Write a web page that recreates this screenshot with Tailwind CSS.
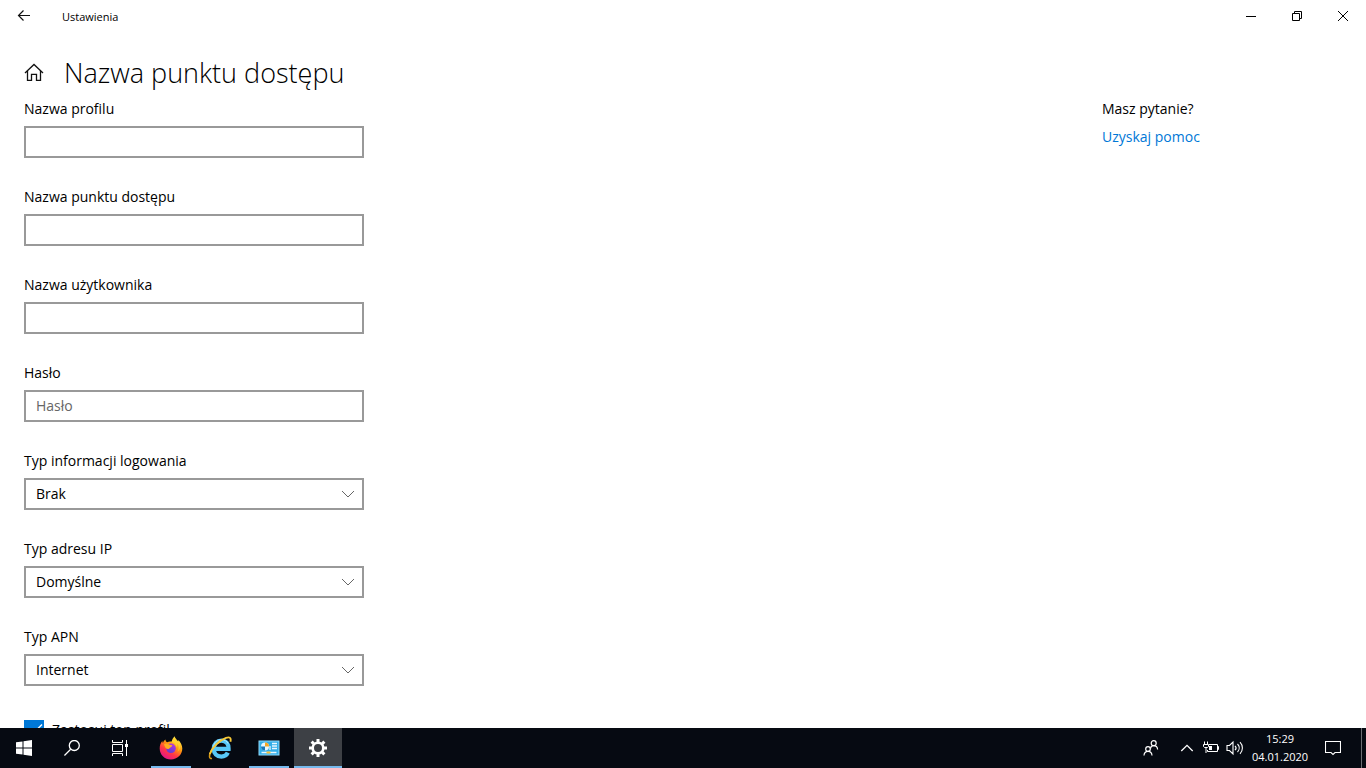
<!DOCTYPE html>
<html lang="pl">
<head>
<meta charset="utf-8">
<meta name="viewport" content="width=device-width, initial-scale=1">
<title>Ustawienia</title>
<script src="https://cdn.jsdelivr.net/npm/@tailwindcss/browser@4"></script>
</head>
<body class="flex h-screen flex-col overflow-hidden bg-white font-['Open_Sans','Noto_Sans',sans-serif] text-sm text-black">

<!-- Title bar -->
<header class="flex h-8 shrink-0 items-center">
  <button type="button" aria-label="Wstecz" class="grid h-8 w-12 place-items-center">
    <svg class="size-4" viewBox="0 0 16 16" fill="none" stroke="#111" stroke-width="1.2"><path d="M14 7.5H2.5M7.5 2.5l-5 5 5 5"/></svg>
  </button>
  <span class="ml-3.5 flex-1 pt-0.5 text-[11px]">Ustawienia</span>
  <button type="button" aria-label="Minimalizuj" class="grid h-8 w-[46px] place-items-center">
    <svg class="size-4" viewBox="0 0 16 16" fill="none" stroke="#000"><path d="M3 8.5h10"/></svg>
  </button>
  <button type="button" aria-label="Przywróć w dół" class="grid h-8 w-[46px] place-items-center">
    <svg class="size-4" viewBox="0 0 16 16" fill="none" stroke="#000"><path d="M3.500 5.500h7v7h-7zM5.500 5.500v-2h7v7h-2"/></svg>
  </button>
  <button type="button" aria-label="Zamknij" class="grid h-8 w-[46px] place-items-center">
    <svg class="size-4" viewBox="0 0 16 16" fill="none" stroke="#000"><path d="M3 3l10 10M13 3L3 13"/></svg>
  </button>
</header>

<div class="flex shrink-0 items-center gap-5 px-6 pt-[21px] pb-[3px]">
  <button type="button" aria-label="Strona główna" class="size-5">
    <svg class="size-5" viewBox="0 0 20 20" fill="none" stroke="#111" stroke-width="1.3"><path d="M1 10L10 1.500l9 8.500M3.500 8v9.400h4v-6h5v6h4V8"/></svg>
  </button>
  <h1 class="text-[27px] leading-10 font-light">Nazwa punktu dostępu</h1>
</div>

<!-- Page content -->
<main class="flex min-h-0 flex-1 justify-between overflow-hidden pt-[3px] pl-6">
  <form class="flex w-[340px] shrink-0 flex-col gap-[29px]">
    <div class="flex flex-col gap-[7px]">
      <label for="profile" class="leading-5">Nazwa profilu</label>
      <input id="profile" type="text" class="h-8 w-full border-2 border-[#999] px-2.5 pb-0.5 outline-none">
    </div>
    <div class="flex flex-col gap-[7px]">
      <label for="apn" class="leading-5">Nazwa punktu dostępu</label>
      <input id="apn" type="text" class="h-8 w-full border-2 border-[#999] px-2.5 pb-0.5 outline-none">
    </div>
    <div class="flex flex-col gap-[7px]">
      <label for="user" class="leading-5">Nazwa użytkownika</label>
      <input id="user" type="text" class="h-8 w-full border-2 border-[#999] px-2.5 pb-0.5 outline-none">
    </div>
    <div class="flex flex-col gap-[7px]">
      <label for="password" class="leading-5">Hasło</label>
      <input id="password" type="password" placeholder="Hasło" class="h-8 w-full border-2 border-[#999] px-2.5 pb-0.5 outline-none placeholder:text-[#666]">
    </div>
    <div class="flex flex-col gap-[7px]">
      <label for="auth" class="leading-5">Typ informacji logowania</label>
      <div class="grid items-center">
        <select id="auth" class="col-start-1 row-start-1 h-8 w-full appearance-none border-2 border-[#999] bg-white px-2.5"><option>Brak</option></select>
        <svg class="pointer-events-none col-start-1 row-start-1 mr-2 h-4 w-4 justify-self-end" viewBox="0 0 16 16" fill="none" stroke="#666"><path d="M2 5l6 6 6-6"/></svg>
      </div>
    </div>
    <div class="flex flex-col gap-[7px]">
      <label for="ip" class="leading-5">Typ adresu IP</label>
      <div class="grid items-center">
        <select id="ip" class="col-start-1 row-start-1 h-8 w-full appearance-none border-2 border-[#999] bg-white px-2.5"><option>Domyślne</option></select>
        <svg class="pointer-events-none col-start-1 row-start-1 mr-2 h-4 w-4 justify-self-end" viewBox="0 0 16 16" fill="none" stroke="#666"><path d="M2 5l6 6 6-6"/></svg>
      </div>
    </div>
    <div class="flex flex-col gap-[7px]">
      <label for="apntype" class="leading-5">Typ APN</label>
      <div class="grid items-center">
        <select id="apntype" class="col-start-1 row-start-1 h-8 w-full appearance-none border-2 border-[#999] bg-white px-2.5"><option>Internet</option></select>
        <svg class="pointer-events-none col-start-1 row-start-1 mr-2 h-4 w-4 justify-self-end" viewBox="0 0 16 16" fill="none" stroke="#666"><path d="M2 5l6 6 6-6"/></svg>
      </div>
    </div>
    <div class="flex items-center gap-2 pt-[5px]">
      <span class="grid size-5 shrink-0">
        <input id="apply" type="checkbox" checked class="col-start-1 row-start-1 size-5 appearance-none bg-[#0078d7]">
        <svg class="pointer-events-none col-start-1 row-start-1 size-5" viewBox="0 0 20 20" fill="none" stroke="#fff" stroke-width="1.4"><path d="M2.500 10l5 5L18 4.500"/></svg>
      </span>
      <label for="apply" class="leading-5">Zastosuj ten profil</label>
    </div>
  </form>
  <aside class="flex w-[264px] shrink-0 flex-col items-start gap-2">
    <p class="leading-5">Masz pytanie?</p>
    <a href="#" class="leading-5 text-[#0078d7]">Uzyskaj pomoc</a>
  </aside>
</main>

<!-- Taskbar -->
<footer class="flex h-10 shrink-0 bg-[#060a12] text-white">
  <button type="button" aria-label="Start" class="grid w-12 place-items-center">
    <svg class="size-4" viewBox="0 0 16 16" fill="#fff"><path d="M0 2.300L6.500 1.400v6.100H0zM7.500 1.200L16 0v7.500H7.500zM0 8.500h6.500v6.100L0 13.700zM7.500 8.500H16V16l-8.500-1.200z"/></svg>
  </button>
  <button type="button" aria-label="Wyszukaj" class="grid w-12 place-items-center">
    <svg class="size-4" viewBox="0 0 16 16" fill="none" stroke="#fff" stroke-width="1.300"><circle cx="10.300" cy="5.500" r="5"/><path d="M6.700 9.200L.4 15.500"/></svg>
  </button>
  <button type="button" aria-label="Widok zadań" class="grid w-12 place-items-center">
    <svg class="size-4" viewBox="0 0 16 16" fill="none" stroke="#fff"><path d="M.5 0v2.500h10V0M.5 4.500h10v7H.5zM.5 16v-2.500h10V16M14.500 0v16"/><path fill="#fff" stroke="none" d="M13 4h3v3h-3z"/></svg>
  </button>
  <div class="ml-[3px] flex gap-px">
    <button type="button" aria-label="Firefox" class="grid w-12 grid-rows-[1fr_2px] place-items-center">
      <svg class="mt-0.5 size-6" viewBox="0 0 24 24">
        <defs>
          <linearGradient id="fx" x1=".8" y1=".05" x2=".25" y2=".95"><stop offset="0" stop-color="#fff44f"/><stop offset=".4" stop-color="#ff980e"/><stop offset=".7" stop-color="#ff3647"/><stop offset="1" stop-color="#e31587"/></linearGradient>
          <linearGradient id="fg" x1=".8" y1="0" x2=".3" y2="1"><stop offset="0" stop-color="#b833e1"/><stop offset="1" stop-color="#5a3fd0"/></linearGradient>
        </defs>
        <path fill="url(#fx)" d="M12 23.500C5.500 23.500.7 18.700.7 12.500c0-3.300 1-5.600 2.600-7.500.1 1 .3 1.500.7 2C4.400 5.400 5.200 4.300 6.500 3.500c0 1.300.6 2.200 1.600 2.700 1.400-.7 3-.9 4.700-.6C13 3.600 14 1.800 15.700.3c.2 2.600 2 3.900 3.500 5.300.1-.6.1-1-.1-1.600 2.700 2.300 4.200 5.400 4.200 8.600 0 6.200-5 10.900-11.300 10.900z"/>
        <circle cx="12" cy="12.300" r="4.800" fill="url(#fg)"/>
        <path fill="#ffad1f" d="M5 8.300c1.600-1 3.500-.9 5.100.2 1 .6 2.100.4 3.200.8-.2 1.400-1.300 1.800-2.300 2.500-.6.500-.9 1.200-1.900 1.300C7.200 13.300 5.600 11 5 8.300z"/>
        <path fill="#ffd52e" d="M12.600 6c2.700.5 4.800 2.600 4.800 5.400 1-1.600.7-3.300 0-4.700 2.100 1.300 3.500 5.600 1 9.100 3.400-2.400 3.600-7.400.7-10.200L15.700 1z" opacity=".75"/>
      </svg>
      <span class="h-0.5 w-10 bg-[#76b9ed]"></span>
    </button>
    <button type="button" aria-label="Internet Explorer" class="grid w-12 grid-rows-[1fr_2px] place-items-center">
      <svg class="mt-0.5 size-6" viewBox="0 0 24 24" fill="none">
        <path stroke="#d99b18" stroke-width="1.500" d="M4 22.500C1 23 .5 19.500 3.500 14.500"/>
        <path stroke="#58c8f7" stroke-width="4.200" d="M6.300 12.900h14.300c.3-5-2.600-8.300-7.200-8.300-4.500 0-7.700 3.400-7.700 8.200 0 4.700 3.200 7.800 7.700 7.800 3.100 0 5.300-1.400 6.400-3.900"/>
        <path stroke="#b5ecff" stroke-width="1" d="M5.300 11c.8-4.400 4-7.300 8.200-7.300 3.100 0 5.500 1.500 6.700 4"/>
        <path stroke="#f8c936" stroke-width="1.900" d="M1.800 18C4 11.500 11.500 4.200 18 1.900c3.800-1.300 5.400 0 4.400 3.800"/>
      </svg>
    </button>
    <button type="button" aria-label="Panel sterowania" class="grid w-12 grid-rows-[1fr_2px] place-items-center">
      <svg class="mt-0.5 size-6" viewBox="0 0 24 24">
        <path fill="#8edcff" d="M1.500 4.500h21v15h-21z"/><path fill="#33aee8" d="M2.500 5.500h19v13h-19z"/>
        <circle cx="8" cy="10.500" r="4" fill="#e8f8ff"/><path fill="#1677b8" d="M8 10.500H4a4 4 0 0 0 4 4z"/><path fill="#f5a623" d="M8 10.500v-4a4 4 0 0 1 4 4z"/>
        <path fill="none" stroke="#e8f8ff" stroke-width="1.300" d="M15 7.500h5M15 10h5M15 12.500h5M13 10v4M4.500 16.500h15"/><path fill="#f5c13b" d="M9.500 15.500h4v2h-4z"/>
      </svg>
      <span class="h-0.5 w-10 bg-[#76b9ed]"></span>
    </button>
    <button type="button" aria-label="Ustawienia" class="grid w-12 grid-rows-[1fr_2px] place-items-center bg-[#3d4045]">
      <svg class="mt-0.5 size-5" viewBox="0 0 20 20" fill="none" stroke="#fff"><circle cx="10" cy="10" r="5.300" stroke-width="2.600"/><path stroke-width="3" d="M10 1v3M10 16v3M1 10h3M16 10h3M3.600 3.600l2.200 2.200M14.200 14.200l2.200 2.200M3.600 16.400l2.200-2.200M14.200 5.800l2.200-2.200"/></svg>
      <span class="h-0.5 w-12 bg-[#76b9ed]"></span>
    </button>
  </div>

  <div class="ml-auto flex">
    <button type="button" aria-label="Kontakty" class="grid w-12 place-items-center">
      <svg class="size-4" viewBox="0 0 16 16" fill="none" stroke="#fff" stroke-width="1.200"><circle cx="10.700" cy="3.200" r="2.500"/><path d="M7.500 8.500c.2-1.800 1.500-2.800 3.200-2.800 2.200 0 3.700 1.400 3.900 3.800"/><circle cx="5" cy="9" r="2.300"/><path d="M1 15.500c.1-2.600 1.600-4.200 4-4.200s3.900 1.600 4 4.200"/></svg>
    </button>
    <button type="button" aria-label="Pokaż ukryte ikony" class="grid w-6 place-items-center">
      <svg class="size-4" viewBox="0 0 16 16" fill="none" stroke="#fff" stroke-width="1.300"><path d="M2.300 11L8 5.300l5.700 5.700"/></svg>
    </button>
    <button type="button" aria-label="Bateria" class="grid w-6 place-items-center">
      <svg class="size-4" viewBox="0 0 16 16" fill="none" stroke="#fff"><path d="M6 4.500h8.500v7h-10V10M14.500 6.500h1v3h-1M1.500 1.500V4M4.500 1.500V4M.5 4.500h5v2l-1 1h-3l-1-1zM3 8v5"/><path fill="#fff" stroke="none" d="M6 6h3v4H6z"/></svg>
    </button>
    <button type="button" aria-label="Głośność" class="grid w-6 place-items-center">
      <svg class="h-4 w-[18px]" viewBox="0 0 18 16" fill="none" stroke="#fff" stroke-width="1.100"><path d="M1 5.500h2.500L7 2v12l-3.500-3.500H1zM9 5.800c1.200 1.200 1.200 3.200 0 4.400M11.500 4c2.200 2.300 2.200 5.700 0 8M14 2.200c3.200 3.300 3.200 8.300 0 11.600"/></svg>
    </button>
    <button type="button" class="flex w-[66px] flex-col items-center justify-center text-[11px] leading-[18px]"><span>15:29</span><span>04.01.2020</span></button>
    <button type="button" aria-label="Centrum akcji" class="grid w-10 place-items-center">
      <svg class="size-4" viewBox="0 0 16 16" fill="none" stroke="#fff" stroke-width="1.100"><path d="M.5 1.500h15v11H10L8 14.500l-2-2H.5z"/></svg>
    </button>
    <button type="button" aria-label="Pokaż pulpit" class="ml-2 w-[5px] border-l border-[#6b6e73]"></button>
  </div>
</footer>
</body>
</html>
